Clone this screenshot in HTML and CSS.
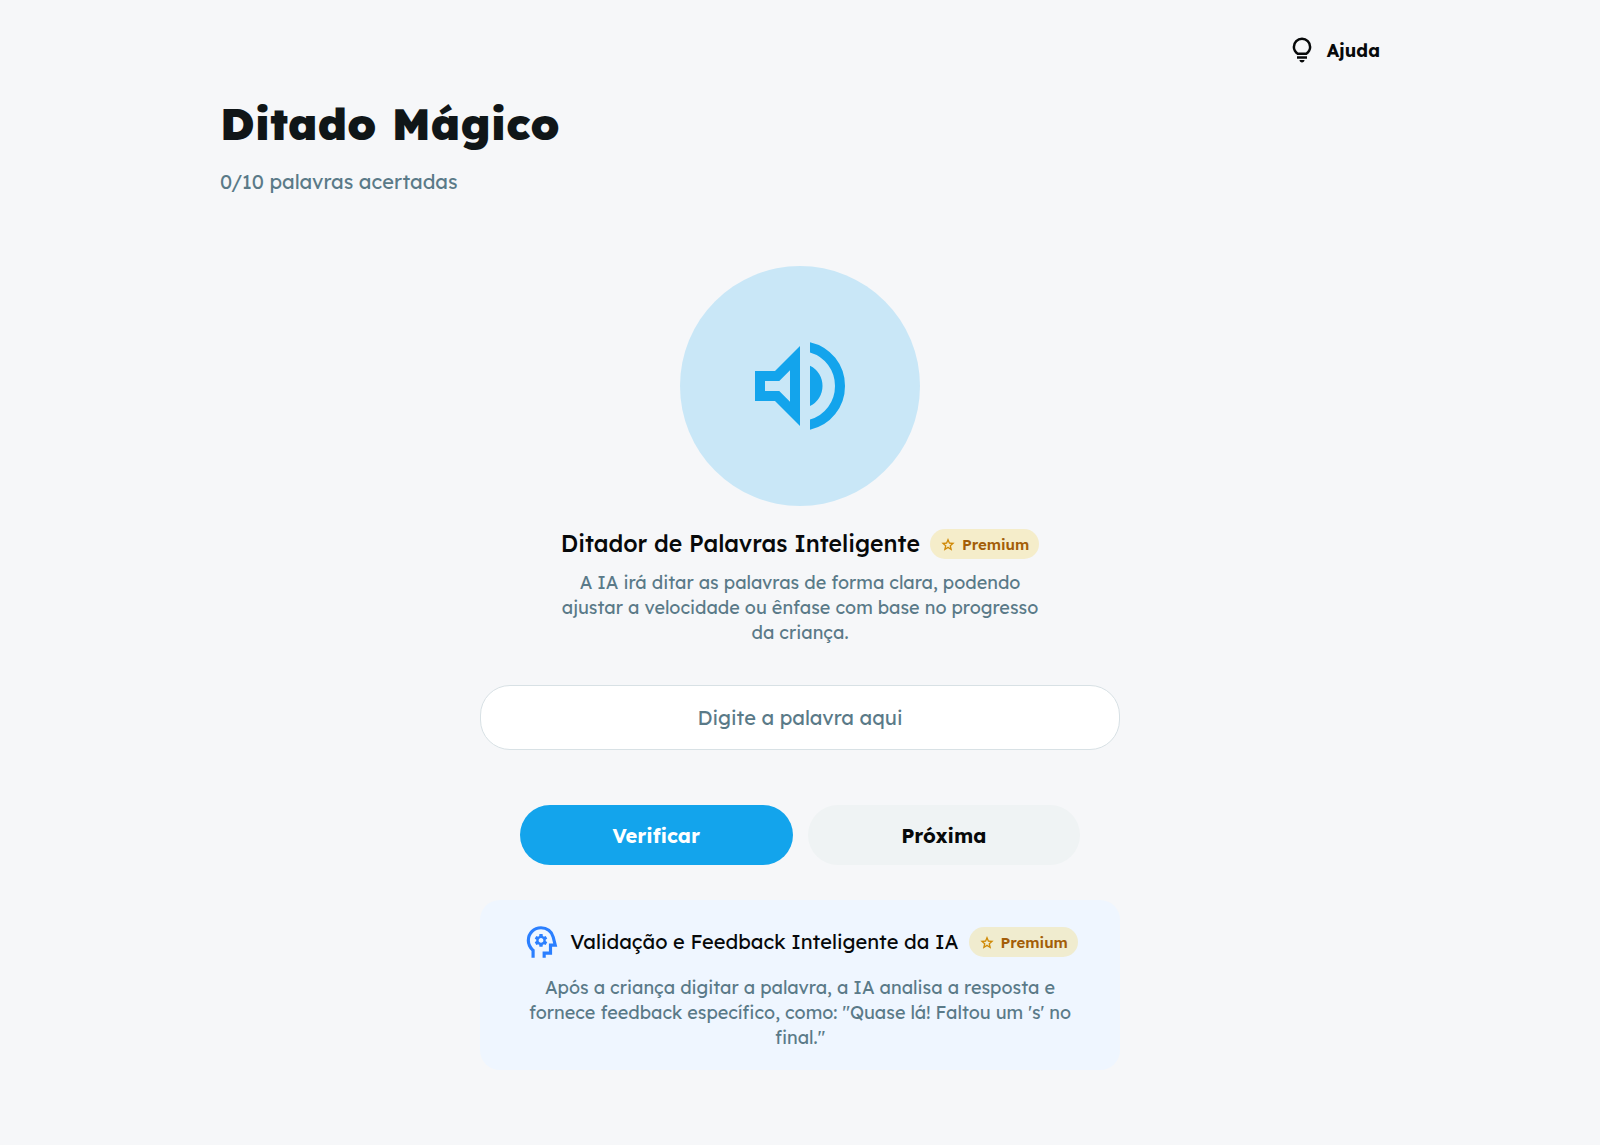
FILE: index.html
```html
<!DOCTYPE html>
<html lang="pt-BR">
<head>
    <meta charset="UTF-8">
    <title>Ditado Mágico</title>
    <meta name="viewport" content="width=device-width, initial-scale=1">
    <link rel="stylesheet" href="styles.css">
</head>
<body>
    <div class="container">
        <div class="topbar">
            <button type="button" class="help-button">
                <svg class="icon-help" viewBox="0 -960 960 960" aria-hidden="true"><path d="M480-80q-33 0-56.5-23.5T400-160h160q0 33-23.5 56.5T480-80ZM320-200v-80h320v80H320Zm10-120q-69-41-109.5-110T180-580q0-125 87.5-212.5T480-880q125 0 212.5 87.5T780-580q0 81-40.5 150T630-320H330Zm24-80h252q45-32 69.5-79T700-580q0-92-64-156t-156-64q-92 0-156 64t-64 156q0 54 24.5 101t69.5 79Z"/></svg>
                Ajuda
            </button>
        </div>

        <header>
            <h1>Ditado Mágico</h1>
            <p class="progress">0/10 palavras acertadas</p>
        </header>

        <main class="game">
            <button type="button" class="listen-button" aria-label="Ouvir palavra">
                <svg class="icon-volume" viewBox="0 -960 960 960" aria-hidden="true"><path d="M560-131v-82q90-26 145-100t55-168q0-94-55-168T560-749v-82q124 28 202 125.5T840-481q0 127-78 224.5T560-131ZM120-360v-240h160l200-200v640L280-360H120Zm440 40v-322q47 22 73.5 66t26.5 96q0 51-26.5 94.5T560-320ZM400-606l-86 86H200v80h114l86 86v-252Z"/></svg>
            </button>

            <div class="title-row">
                <h2>Ditador de Palavras Inteligente</h2>
                <span class="badge">
                    <svg class="icon-star" viewBox="0 -960 960 960" aria-hidden="true"><path d="m354-247 126-76 126 77-33-144 111-96-146-13-58-136-58 135-146 13 111 97-33 143ZM233-80l65-281L80-550l288-25 112-265 112 265 288 25-218 189 65 281-247-149L233-80Z"/></svg>
                    Premium
                </span>
            </div>
            <p class="description">A IA irá ditar as palavras de forma clara, podendo ajustar a velocidade ou ênfase com base no progresso da criança.</p>

            <form class="answer-form" id="answerForm">
                <input type="text" class="word-input" name="word" placeholder="Digite a palavra aqui" aria-label="Digite a palavra aqui" autocomplete="off">
                <div class="actions">
                    <button type="submit" class="btn btn-primary">Verificar</button>
                    <button type="button" class="btn btn-secondary">Próxima</button>
                </div>
            </form>

            <section class="feedback">
                <div class="title-row">
                    <svg class="icon-head" viewBox="0 -960 960 960" aria-hidden="true"><path d="M440-360h80l6-50q8-3 14.5-7t11.5-9l46 20 40-68-40-30q2-8 2-16t-2-16l40-30-40-68-46 20q-5-5-11.5-9t-14.5-7l-6-50h-80l-6 50q-8 3-14.5 7t-11.5 9l-46-20-40 68 40 30q-2 8-2 16t2 16l-40 30 40 68 46-20q5 5 11.5 9t14.5 7l6 50Zm40-100q-25 0-42.5-17.5T420-520q0-25 17.5-42.5T480-580q25 0 42.5 17.5T540-520q0 25-17.5 42.5T480-460ZM240-80v-172q-57-52-88.5-121.5T120-520q0-150 105-255t255-105q125 0 221.5 73.5T827-615l64 255H760v200H600v80h-80v-160h160v-200h108l-38-155q-23-91-98-148t-172-57q-116 0-198 81t-82 197q0 60 24.5 114t69.5 96l26 24v208h-80Z"/></svg>
                    <h3>Validação e Feedback Inteligente da IA</h3>
                    <span class="badge">
                        <svg class="icon-star" viewBox="0 -960 960 960" aria-hidden="true"><path d="m354-247 126-76 126 77-33-144 111-96-146-13-58-136-58 135-146 13 111 97-33 143ZM233-80l65-281L80-550l288-25 112-265 112 265 288 25-218 189 65 281-247-149L233-80Z"/></svg>
                        Premium
                    </span>
                </div>
                <p>Após a criança digitar a palavra, a IA analisa a resposta e fornece feedback específico, como: "Quase lá! Faltou um 's' no final."</p>
            </section>
        </main>
    </div>

    <script>
        document.getElementById("answerForm").addEventListener("submit", function (e) {
            e.preventDefault();
        });
    </script>
</body>
</html>
```
FILE: styles.css
```css
* {
    box-sizing: border-box;
}
body {
    font-family: Lexend, Inter, sans-serif;
    background-color: #f6f7f9;
    color: #07090a;
    margin: 0;
}
h1, h2, h3, p {
    margin: 0;
}
button, input {
    font-family: inherit;
}
button {
    border: none;
    cursor: pointer;
}
svg {
    flex-shrink: 0;
    fill: currentColor;
}
.container {
    max-width: 1200px;
    margin: 0 auto;
    padding: 25px 20px 75px;
}
.topbar {
    display: flex;
    justify-content: flex-end;
}
.help-button {
    display: flex;
    align-items: center;
    gap: 10px;
    height: 50px;
    padding: 0;
    background: none;
    color: #07090a;
    font-size: 18px;
    font-weight: 700;
}
.icon-help {
    width: 30px;
    height: 30px;
}
h1 {
    margin-top: 20px;
    color: #101618;
    font-size: 44px;
    line-height: 58px;
    font-weight: 900;
}
.progress {
    margin-top: 14px;
    color: #5a7a88;
    font-size: 20px;
    line-height: 30px;
}
.game {
    display: flex;
    flex-direction: column;
    align-items: center;
    margin-top: 69px;
}
.listen-button {
    display: flex;
    align-items: center;
    justify-content: center;
    width: 240px;
    height: 240px;
    padding: 0;
    border-radius: 50%;
    background-color: #c9e7f7;
    color: #13a4ec;
}
.icon-volume {
    width: 120px;
    height: 120px;
}
.title-row {
    display: flex;
    align-items: center;
    justify-content: center;
    gap: 10px;
}
.game > .title-row {
    margin-top: 23px;
}
h2 {
    font-size: 23px;
    line-height: 28px;
    font-weight: 500;
}
h3 {
    font-size: 20px;
    line-height: 30px;
    font-weight: 400;
}
.badge {
    display: flex;
    align-items: center;
    gap: 6px;
    height: 30px;
    padding: 0 10px;
    border-radius: 15px;
    background-color: rgba(244, 208, 63, 0.25);
    color: #a35e08;
    font-size: 15px;
    font-weight: 600;
}
.icon-star {
    width: 16px;
    height: 16px;
    color: #d08a08;
}
.description {
    max-width: 480px;
    margin-top: 11px;
}
.description, .feedback p {
    color: #5a7a88;
    font-size: 18px;
    line-height: 25px;
    text-align: center;
}
.answer-form {
    width: 100%;
    max-width: 640px;
    margin-top: 40px;
}
.word-input {
    display: block;
    width: 100%;
    height: 65px;
    padding: 0 30px;
    border: 1px solid #d8e1e5;
    border-radius: 30px;
    background-color: #fff;
    color: #101618;
    font-size: 20px;
    text-align: center;
}
.word-input::placeholder {
    color: #5a7a88;
    opacity: 1;
}
.actions {
    display: flex;
    gap: 15px;
    margin-top: 55px;
    padding: 0 40px;
}
.btn {
    flex: 1;
    height: 60px;
    border-radius: 30px;
    font-size: 20px;
    font-weight: 700;
}
.btn-primary {
    background-color: #13a4ec;
    color: #fff;
}
.btn-secondary {
    background-color: #eff3f4;
    color: #07090a;
}
.feedback {
    width: 100%;
    max-width: 640px;
    margin-top: 35px;
    padding: 23px 40px 20px;
    border-radius: 20px;
    background-color: #eff6ff;
}
.feedback p {
    margin-top: 14px;
}
.icon-head {
    width: 38px;
    height: 38px;
    color: #2b7fff;
}
```
